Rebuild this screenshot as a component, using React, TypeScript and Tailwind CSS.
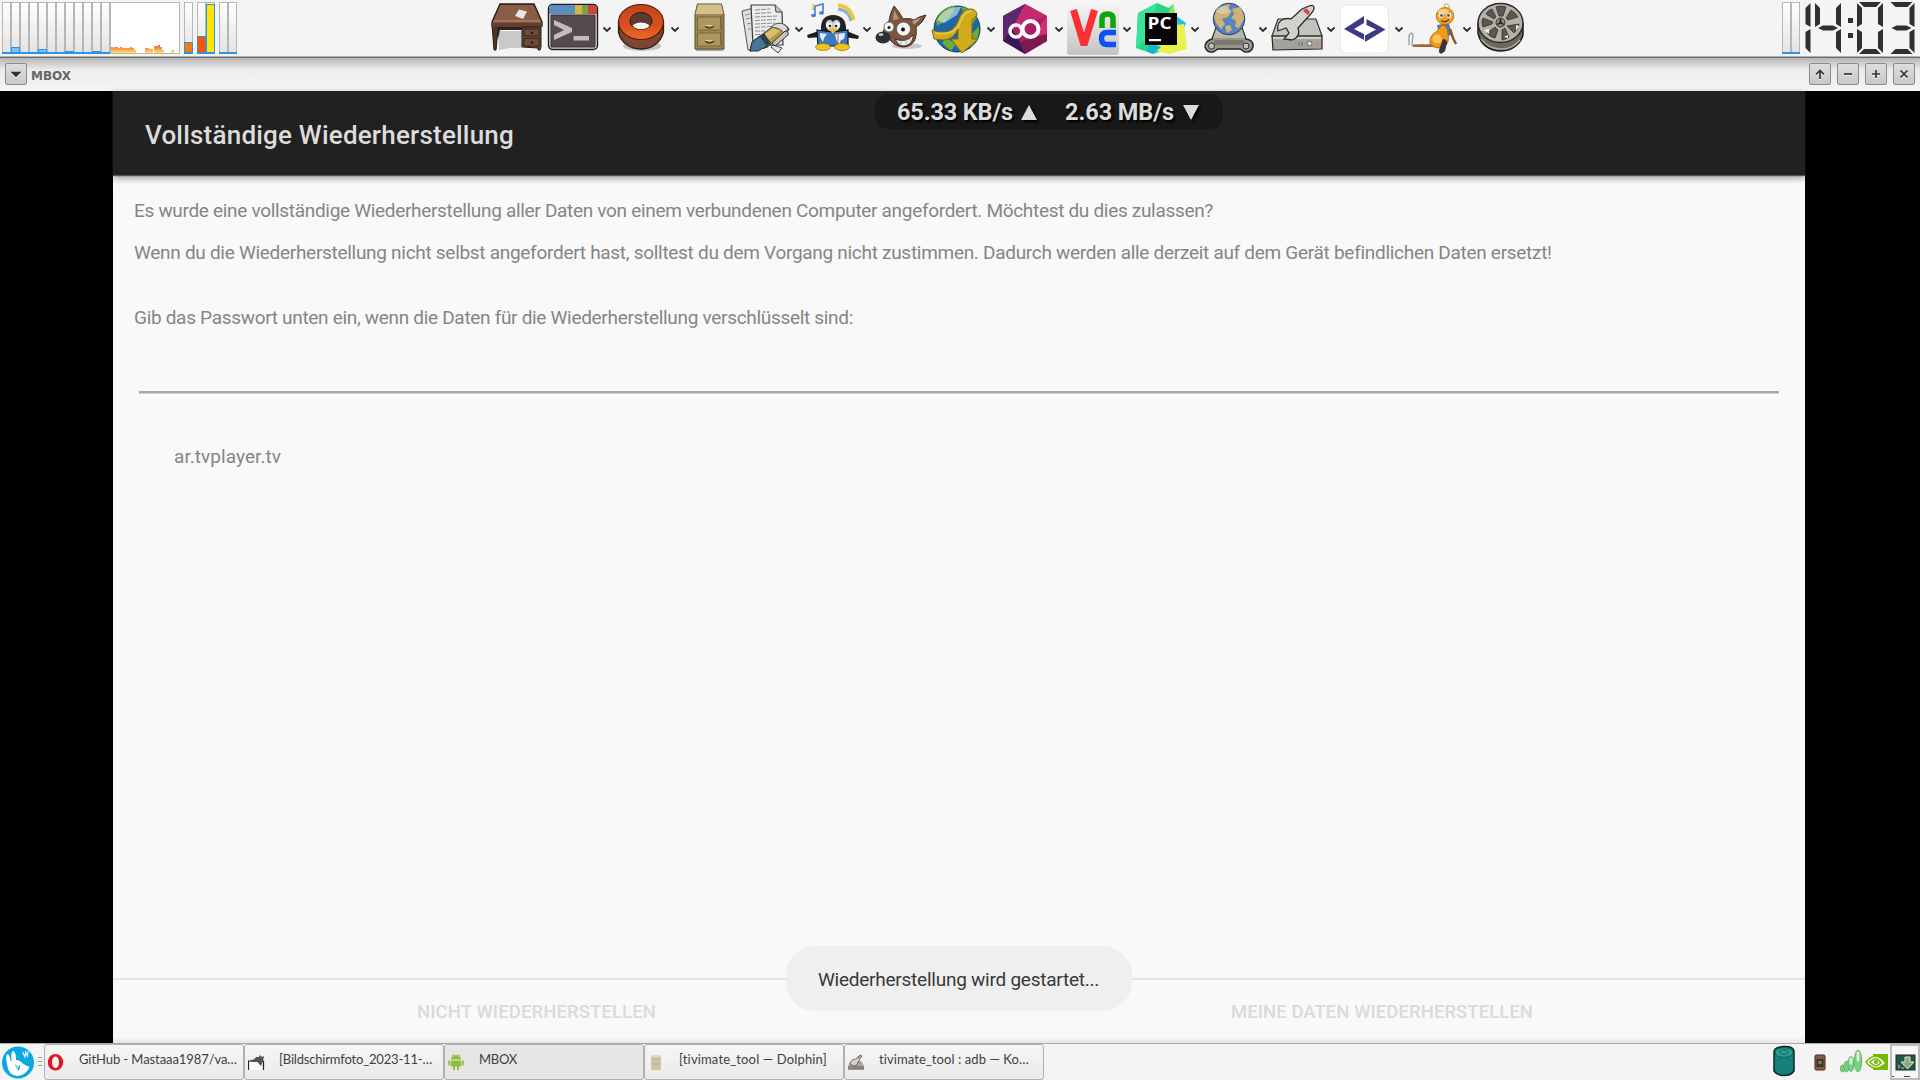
import { useLayoutEffect, useRef, useState, type ReactNode } from "react";

/* Single line of text whose letter spacing is tuned so that it spans `w` pixels. */
function Fit({ w, className = "", children }: { w: number; className?: string; children: string }) {
  const ref = useRef<HTMLSpanElement>(null);
  const [spacing, setSpacing] = useState(0);
  useLayoutEffect(() => {
    const natural = ref.current!.getBoundingClientRect().width;
    setSpacing((w - natural) / children.length);
  }, []);
  return (
    <span ref={ref} style={{ letterSpacing: spacing }} className={"inline-block whitespace-nowrap " + className}>
      {children}
    </span>
  );
}

function Icon({ children }: { children: ReactNode }) {
  return (
    <svg width="52" height="56" viewBox="0 0 52 56" className="block shrink-0 overflow-visible">
      {children}
    </svg>
  );
}

const Desk = () => (
  <Icon>
    <path d="M7 30h24v17H19L8 49z" fill="#c9c9c9" />
    <path d="M1 24l6 1v3L5 49H3z" fill="#4a3528" stroke="#241a14" />
    <path d="M9 3h34l8 18v4H1v-4z" fill="#7d5440" stroke="#2a1c14" strokeWidth="1.300" />
    <path d="M10 4h32l7 16H3z" fill="#8a5d47" />
    <path d="M3 19h46l1 2H2z" fill="#a87458" />
    <path d="M1 22h50v4H1z" fill="#5f3f30" />
    <path d="M31 26h19v20l-1 3h-2v-2l-16-1z" fill="#664636" stroke="#2a1c14" />
    <path d="M33 28h15v7H33zM33 37.500h15v7.500H33z" fill="#6f4c3a" stroke="#3c281c" />
    <circle cx="41" cy="32" r="1.200" fill="#2b1b12" />
    <circle cx="41" cy="41.500" r="1.200" fill="#2b1b12" />
    <path d="M28 8.500l8 2-4 7.500-8-3z" fill="#e6e6e6" />
    <path d="M7 26h24v3H9L7 38z" fill="#30211a" />
  </Icon>
);

const Terminal = () => (
  <Icon>
    <rect x="1.500" y="3.500" width="49" height="45" rx="4" fill="#d9d6cc" stroke="#1f1f1f" strokeWidth="1.400" />
    <path d="M2 13V7q0-3 4-3h22v9z" fill="#5a8fbd" />
    <path d="M28 4h7v9h-7z" fill="#d5b53f" />
    <path d="M35 4h6v9h-6z" fill="#7fa143" />
    <path d="M41 4h5q4 0 4 4v5h-9z" fill="#c9473f" />
    <path d="M4 14h44v32H4z" fill="#554a4d" stroke="#3a3234" />
    <path d="M7 19l18 8v4L7 39v-5l10-5-10-5z" fill="#c4bdb8" />
    <path d="M26.500 35H42v4.500H26.500z" fill="#c4bdb8" />
  </Icon>
);

const Donut = () => (
  <Icon>
    <defs>
      <linearGradient id="donutTop" x2="0" y2="1">
        <stop stopColor="#c2431c" />
        <stop offset=".6" stopColor="#d84f1d" />
        <stop offset="1" stopColor="#ee6a26" />
      </linearGradient>
    </defs>
    <ellipse cx="27" cy="45" rx="19" ry="5" fill="#8d8d8d" opacity=".5" />
    <path d="M3.500 21v10c2 10 11 17 22.500 17s20-7 22.500-17V21z" fill="#7e4632" stroke="#38190f" strokeWidth="1.300" />
    <ellipse cx="26" cy="21" rx="22.500" ry="17.500" fill="url(#donutTop)" stroke="#4c1d0d" strokeWidth="1.200" />
    <ellipse cx="26" cy="20" rx="11" ry="8.500" fill="#5c3a30" stroke="#3c170c" />
    <path d="M17.500 24.500c4-4 13-4 17 0-3 5-14 5-17 0z" fill="#f4f4f4" />
  </Icon>
);

const Cabinet = () => (
  <Icon>
    <path d="M12 47h30l-2 3H13z" fill="#aaa" />
    <path d="M14.500 3h24l2.500 10v35H12V13z" fill="#9c8754" stroke="#5d4e2d" />
    <path d="M15 3.500h23l2.500 9.500h-28z" fill="#d3c08c" />
    <path d="M14.500 16h23v13h-23zM14.500 32h23v13h-23z" fill="#ad975e" stroke="#78663a" />
    <path d="M22 25q4 4 9 0M22 40q4 4 9 0" fill="none" stroke="#4b3f22" strokeWidth="1.500" />
    <path d="M22 24.500h8M22 39.500h8" stroke="#dccb98" />
    <path d="M38 14h2.500v33H38z" fill="#8a7545" />
  </Icon>
);

const Writer = () => (
  <Icon>
    <path d="M3 10l12-3 14 39-20 3z" fill="#e0e0e0" stroke="#555" />
    <path d="M34 44l9 3-4 5-7-6z" fill="#e5e5e5" stroke="#444" />
    <path d="M12 4h24l7 7 1 33H14z" fill="#ececea" stroke="#3a3a3a" strokeWidth="1.200" />
    <path d="M36 4l1 7h6" fill="#c8c8c8" stroke="#444" />
    <path d="M16 9l15-1M16 12.500l16-1M16 16l22-1M16 19.500l21-1M16 23l20-1M16 26.500l16-1M16 30h10M16 33.500h6M6 14l5-1M7 18l5-1M8 23l5-1M9 28h4" stroke="#8f8f8f" strokeWidth="1" strokeDasharray="5 1" />
    <path d="M11 50l2-9 23-17q9-4 14 4l-4 7-20 12z" fill="#b79845" stroke="#222" />
    <path d="M20 37l14-10 7 3-16 12z" fill="#d8c06c" />
    <path d="M11 50l2-9 8-6 7 10-9 5z" fill="#47759a" stroke="#1e374b" />
    <path d="M21 35l4-3 7 10-4 3z" fill="#31414c" />
    <path d="M36 23q9-3 13 5l-4 5q-2-6-13-7z" fill="#dedbd5" stroke="#555" />
    <path d="M33 42l13-12q4 0 3 4L36 45z" fill="#c3c1b9" stroke="#333" />
  </Icon>
);

const Penguin = () => (
  <Icon>
    <path d="M8 14V5l8-2v8" fill="none" stroke="#3f7fd2" strokeWidth="1.600" />
    <ellipse cx="6.500" cy="14.500" rx="2.500" ry="1.800" fill="#3f7fd2" />
    <ellipse cx="14.500" cy="12" rx="2.500" ry="1.800" fill="#3f7fd2" />
    <path d="M6 3v5M5 8h2" stroke="#e9b526" strokeWidth="1.300" />
    <path d="M31 8c7 1 12 5 13 12" fill="none" stroke="#86aee2" strokeWidth="3" />
    <path d="M31 4c8 1 14 6 15.500 15" fill="none" stroke="#f1c62e" strokeWidth="3.500" />
    <path d="M15 29L0 34l1 3 14-1zM37 29l15 6-1 3-14-2z" fill="#1c1c1c" />
    <path d="M26 14c-8 0-12 5-12 13v18h25V27c0-8-5-13-13-13z" fill="#222" />
    <path d="M26 21q3-4 6-1t-1 9q-5 3-10 0-4-6-1-9t6 1z" fill="#c9c9c9" />
    <circle cx="22" cy="24.500" r="3" fill="#f4f4f4" />
    <circle cx="30" cy="24.500" r="3" fill="#f4f4f4" />
    <circle cx="23" cy="25" r="1.300" fill="#222" />
    <circle cx="29" cy="25" r="1.300" fill="#222" />
    <path d="M22 27.500h8l-4 5z" fill="#f3bb22" />
    <path d="M10 29l15 2 16-2v16H11z" fill="#3978c5" stroke="#111" strokeWidth="1.200" />
    <path d="M22.500 29h7l-3.500 4z" fill="#f3bb22" />
    <path d="M13 32l7 1-3 4-1 4-3-5zM28 33l10-1-1 6-3 1-2 5-3-6z" fill="#e5edf7" />
    <path d="M31 31v13" stroke="#d55" />
    <ellipse cx="16" cy="46" rx="7.500" ry="3.500" fill="#f0c31d" stroke="#98700c" strokeWidth=".7" />
    <ellipse cx="35" cy="46" rx="7.500" ry="3.500" fill="#f0c31d" stroke="#98700c" strokeWidth=".7" />
  </Icon>
);

const Wilber = () => (
  <Icon>
    <ellipse cx="32" cy="45" rx="15" ry="3" fill="#888" opacity=".4" />
    <path d="M14 20q1-8 5-15 5 5 9 13c5-1 9 0 11 1q6-4 12-5-3 8-10 12c1 8 0 19-12 20-8 0-13-5-15-9l-6-5q2-9 6-12z" fill="#80553d" stroke="#3c2b22" />
    <path d="M19 9l5 9-6 1zM47 16l-8 8-2-4z" fill="#b39483" />
    <path d="M20 38c8 3 14 1 18-4 1 6-4 11-10 11-4 0-6-4-8-7z" fill="#eee" stroke="#3c2b22" />
    <path d="M26 39v5M31 38v5M35 36v4" stroke="#999" strokeWidth=".8" />
    <circle cx="14" cy="26" r="5" fill="#f4f4f4" stroke="#555" strokeWidth=".8" />
    <circle cx="28.500" cy="28" r="7" fill="#f4f4f4" stroke="#555" strokeWidth=".8" />
    <circle cx="14" cy="26.500" r="1.500" fill="#111" />
    <circle cx="28" cy="28.500" r="2" fill="#111" />
    <ellipse cx="8" cy="36.500" rx="7.500" ry="6" fill="#2c3034" />
    <ellipse cx="6" cy="33.500" rx="2.500" ry="1.600" fill="#b9c1c6" />
  </Icon>
);

const Download = () => (
  <Icon>
    <circle cx="26" cy="28" r="23" fill="#1f66a8" stroke="#16405f" />
    <path d="M5 20Q11 6 24 5l-2 7-7 8-9 5zM30 6q10 0 16 10l-6 10-5-9zM15 37l10 6-5 7-9-8zM41 33l7-8q1 15-9 22z" fill="#6cab35" />
    <path d="M6 19Q14 5 30 6l-4 8-13 8z" fill="#d9edf6" opacity=".6" />
    <path d="M1 29q7 3 14 2 8-1 12-11 4-13 14-12 5 1 5 7-5 1-5 8v15h6L31 52 20 38h7V28q-4 10-14 11l-10-1z" fill="#d0ac1d" stroke="#7f6b14" />
    <path d="M4 32q20 3 25-10 4-12 12-12" fill="none" stroke="#ecd25a" strokeWidth="2" opacity=".7" />
  </Icon>
);

const Hexagon = () => (
  <Icon>
    <path d="M26 3l22 12v25L26 53 4 40V15z" fill="#ad1f65" />
    <path d="M26 3L4 15v25l9-12z" fill="#5d2871" />
    <path d="M26 3l22 12-22 8-13 5z" fill="#c22a72" />
    <path d="M4 40l9-12 8 13 5 12z" fill="#371a53" />
    <path d="M21 41l27-8v7L26 53z" fill="#7b1a4f" />
    <path d="M48 15v18l-14 3z" fill="#d52e6b" />
    <circle cx="17" cy="30" r="6" fill="none" stroke="#fff" strokeWidth="3.500" />
    <circle cx="31.500" cy="28" r="8" fill="none" stroke="#fff" strokeWidth="4" />
  </Icon>
);

const Vnc = () => (
  <Icon>
    <defs>
      <linearGradient id="vncBg" x2="0" y2="1">
        <stop stopColor="#f5f5f5" />
        <stop offset="1" stopColor="#c4c4c4" />
      </linearGradient>
    </defs>
    <rect x="0" y="2" width="52" height="52" rx="3" fill="url(#vncBg)" />
    <path d="M6.500 9l10.500 35L27.500 9" fill="none" stroke="#fd2f34" strokeWidth="7" strokeLinejoin="bevel" />
    <path d="M35 27V18q0-5 5.500-5t5.500 5v9" fill="none" stroke="#09a808" strokeWidth="5.500" />
    <path d="M49 31.500h-9q-5.500 0-5.500 6t5.500 6h9" fill="none" stroke="#0b50f8" strokeWidth="5.500" />
  </Icon>
);

const PyCharm = () => (
  <Icon>
    <path d="M3 12L22 2l12 5 4-4 3 14-5 30L18 53 1 47z" fill="#25d78b" />
    <path d="M22 2L3 12 1 47l12-10z" fill="#3ce29a" />
    <path d="M38 3l3 14-12 4z" fill="#8be64b" />
    <path d="M41 15l10 7-4 10-6 2z" fill="#16c8e8" />
    <path d="M41 24l8-1 3 25-18 5-16-4 4-8z" fill="#e8f24a" />
    <path d="M16 42l10 4-8 7-7-3z" fill="#10b8c8" />
    <rect x="10" y="12" width="32" height="32" fill="#060606" />
    <text x="12.500" y="27.800" fill="#fff" fontFamily="Open Sans, sans-serif" fontWeight="700" fontSize="16.500" textLength="24" lengthAdjust="spacingAndGlyphs">PC</text>
    <path d="M14 38h12v2.200H14z" fill="#fff" />
  </Icon>
);

const GlobeStand = () => (
  <Icon>
    <path d="M13 27h26l4 11q8 1 7 8-2 6-8 5l-5-3H15l-5 3q-6 1-8-5 0-6 7-8z" fill="#98958a" stroke="#26241f" strokeWidth="1.400" />
    <path d="M13 28h26l3 9H10z" fill="#b9b6aa" />
    <path d="M11 39h30v5H11z" fill="#7b786f" />
    <circle cx="8.500" cy="45" r="3" fill="#c4c0b4" stroke="#333" />
    <circle cx="43" cy="45" r="3" fill="#c4c0b4" stroke="#333" />
    <circle cx="26" cy="18" r="15.800" fill="#5783bf" stroke="#283f66" />
    <path d="M13 10q6-6 14-7l-2 5 4 2-4 6-6 2 3 5-4 5-5-6-2-6zM29 8l8-2q4 6 4 12l-5 9-4-1 1-6-5-3 3-4zM22 25l5-1 2 5-5 3z" fill="#cdb27a" />
    <ellipse cx="20" cy="9" rx="7" ry="4" fill="#fff" opacity=".3" />
  </Icon>
);

const DriveWrench = () => (
  <Icon>
    <path d="M7 18h38l6 17H1z" fill="#c3c3bd" stroke="#333" strokeWidth="1.200" />
    <path d="M1 35h50v13l-49 1z" fill="#a3a39d" stroke="#252525" strokeWidth="1.200" />
    <path d="M2 36h48v2H2z" fill="#d0d0c9" />
    <path d="M28 41v4M31 41v4" stroke="#666" />
    <circle cx="38.500" cy="42.500" r="2.500" fill="#ddd" stroke="#666" />
    <path d="M46 40v5" stroke="#d58b5a" strokeWidth="2" />
    <path d="M38 5q5-2 5 2 0 3-5 8L27 27q3 9-6 12l-8-1 5-6-3-5-8 3q-2-9 6-12 4-1 7 0L31 8z" fill="#d4d3cb" stroke="#2d2d2d" strokeWidth="1.300" />
    <path d="M32 10l5 4 2-3-4-4z" fill="#cc4c45" />
  </Icon>
);

const CodeTag = () => (
  <Icon>
    <rect x="1" y="4" width="48.500" height="48" rx="7" fill="#fff" stroke="#e6e6e6" />
    <path d="M25 15L5 28l20 11v-6l-10-5 10-6zM27.500 18v6l9.500 4.500-11 6V41l20.500-12.500z" fill="#3d3a84" />
  </Icon>
);

const Mascot = () => (
  <Icon>
    <path d="M2 44V35q2-5 4-1l-1 10h12" fill="none" stroke="#999" strokeWidth="1.300" />
    <path d="M6 44l20-1 2 3-22 0z" fill="#a5622c" />
    <path d="M30 24l12-2 3 12-12 2z" fill="#3a80bd" />
    <path d="M43 28l3 9 3 6" fill="none" stroke="#8e552b" strokeWidth="2.500" />
    <path d="M35 24q5 0 6 8 2 12-5 14-9 3-13-4-1-7 6-11z" fill="#f0981b" stroke="#a45d0b" strokeWidth=".8" />
    <circle cx="30" cy="38" r="4.500" fill="#f9c452" />
    <ellipse cx="38" cy="15" rx="8.800" ry="8.500" fill="#f6a41f" stroke="#b8690f" strokeWidth=".8" />
    <ellipse cx="36" cy="10.500" rx="5" ry="2.500" fill="#fbd27a" />
    <path d="M38 6q-2-4 2-3 3 1 2 4" fill="none" stroke="#c7a06c" />
    <circle cx="34" cy="14.500" r="2.400" fill="#e9f3ff" />
    <circle cx="42" cy="14.500" r="2.400" fill="#e9f3ff" />
    <circle cx="34.500" cy="14.500" r="1.400" fill="#2465aa" />
    <circle cx="41.500" cy="14.500" r="1.400" fill="#2465aa" />
    <path d="M34 19.500q4 3 8-1" fill="none" stroke="#8b2f10" strokeWidth="1.300" />
    <path d="M36 38q4 0 4 4l-2 8q-6 6-6-1z" fill="#35373b" />
  </Icon>
);

const Reel = () => (
  <Icon>
    <path d="M3 23v9c2 11 11 18 23 18s20-8 22-16V23z" fill="#6b6861" stroke="#1d1c1a" strokeWidth="1.500" />
    <path d="M6 38q8 10 20 10t19-9" fill="none" stroke="#aaa69c" strokeWidth="1.500" />
    <ellipse cx="25.500" cy="22" rx="22.500" ry="19.500" fill="#b5b1a6" stroke="#2c2a27" strokeWidth="1.500" />
    <g fill="#5b5852" stroke="#33312e" strokeWidth=".8">
      <path d="M21 6q5-2 10 0l-3 9h-4z" />
      <path d="M36 9q5 3 7 7l-10 3-2-2z" />
      <path d="M44 23q-1 6-5 9l-7-7z" />
      <path d="M34 36q-4 3-7 3v-10l3-2z" />
      <path d="M20 37q-5-1-8-5l8-6 3 3z" />
      <path d="M8 26q-2-5 0-9l10 4-1 2z" />
      <path d="M11 13q2-4 6-5l4 8-2 2z" />
    </g>
    <path d="M9 29l5-1v5zM29 36l4-2v3zM41 24l3 1-3 5z" fill="#eee" />
    <circle cx="25.500" cy="21.500" r="4.500" fill="#8b877e" stroke="#333" />
    <path d="M25.500 21.500v-3.500M25.500 21.500l3 2M25.500 21.500l-3 2" stroke="#111" strokeWidth="1.400" />
  </Icon>
);

const launchers: { icon: () => ReactNode; menu: boolean }[] = [
  { icon: Desk, menu: false },
  { icon: Terminal, menu: true },
  { icon: Donut, menu: true },
  { icon: Cabinet, menu: false },
  { icon: Writer, menu: true },
  { icon: Penguin, menu: true },
  { icon: Wilber, menu: false },
  { icon: Download, menu: true },
  { icon: Hexagon, menu: true },
  { icon: Vnc, menu: true },
  { icon: PyCharm, menu: true },
  { icon: GlobeStand, menu: true },
  { icon: DriveWrench, menu: true },
  { icon: CodeTag, menu: true },
  { icon: Mascot, menu: true },
  { icon: Reel, menu: false },
];

type Bar = { h?: number; fill?: string };

/* One column of a load monitor. */
function Meter({ h = 0, fill = "bg-[#7cc0f8]" }: Bar) {
  return (
    <div className="flex h-[52px] w-[9px] flex-col justify-end border border-b-0 border-[#b6b6b6] bg-linear-to-b from-white to-[#e2e2e2]">
      {h > 0 && <div className={"-mx-px shrink-0 border border-b-0 border-[#2b93e8] " + fill} style={{ height: h }} />}
      <div className="-mx-px h-[2px] shrink-0 bg-[#2b93e8]" />
    </div>
  );
}

const cpu = [0, 5, 0, 0, 3, 0, 0, 1, 0, 0, 1, 0];
const net: [number, number][] = [
  [0, 6], [2, 5], [3, 6], [5, 6], [7, 5], [9, 6], [11, 5], [13, 5], [15, 5], [17, 5], [19, 6], [21, 5], [23, 3],
  [34, 5], [36, 5], [38, 4], [40, 4], [43, 7], [45, 7], [47, 8], [49, 6], [51, 3], [60, 2], [61, 3],
];

const segments: Record<string, string> = {
  a: "2,2 24,2 19,7 7,7",
  b: "26,3 26,27 21,24 21,8",
  c: "26,29 26,53 21,48 21,32",
  d: "2,54 24,54 19,49 7,49",
  e: "0,29 0,53 5,48 5,32",
  f: "0,3 0,27 5,24 5,8",
  g: "3,28 8,25.500 18,25.500 23,28 18,30.500 8,30.500",
};
const clock: [number, string][] = [
  [0.5, "bc"],
  [31, "fgbc"],
  [73, "abcdef"],
  [104.5, "abgcd"],
];

function LcdClock() {
  return (
    <svg width="132" height="56" viewBox="0 0 132 56" role="img" aria-label="14:03" fill="#303030" className="block">
      {clock.map(([x, on]) => (
        <g key={x} transform={`translate(${x} 0)`}>
          {on.split("").map((s) => <polygon key={s} points={segments[s]} />)}
        </g>
      ))}
      <rect x="64" y="18" width="5" height="5" />
      <rect x="64" y="33" width="5" height="5" />
    </svg>
  );
}

function TopPanel() {
  return (
    <header className="flex h-[58px] border-b border-[#6e6e6e] bg-[#f4f4f4] pl-[2px] pr-[4px] shadow-[inset_0_-1px_0_#b0b0b0]">
      <div className="flex w-[489px] pt-[2px]">
        {cpu.map((h, i) => <Meter key={i} h={h} />)}
        <div className="h-[52px] w-[70px] border border-[#b6b6b6] bg-white">
          <svg width="68" height="50" viewBox="0 0 68 50" className="block">
            <defs>
              <linearGradient id="heat" gradientUnits="userSpaceOnUse" x1="0" y1="42" x2="0" y2="50">
                <stop stopColor="#ef6558" />
                <stop offset=".45" stopColor="#f6935a" />
                <stop offset="1" stopColor="#fde94c" />
              </linearGradient>
            </defs>
            {net.map(([x, h]) => <rect key={x} x={x} y={50 - h} width="2" height={h} fill="url(#heat)" />)}
          </svg>
        </div>
        <div className="ml-[4px] flex"><Meter h={10} fill="bg-[#f57c0a]" /></div>
        <div className="ml-[4px] flex">
          <Meter h={16} fill="bg-[#ff5100]" />
          <Meter h={48} fill="bg-[#ffe600]" />
        </div>
        <div className="ml-[4px] flex"><Meter /><Meter /></div>
      </div>
      <nav className="flex">
        {launchers.map(({ icon: Glyph, menu }, i) => (
          <div key={i} className="flex items-center">
            <Glyph />
            {menu ? (
              <svg width="16" height="56" viewBox="0 0 16 56" className="block">
                <path d="M4.500 26.500l3.500 3.500 3.500-3.500" fill="none" stroke="#2e2e2e" strokeWidth="1.800" />
              </svg>
            ) : (
              <div className="w-[4px]" />
            )}
          </div>
        ))}
      </nav>
      <div className="ml-auto flex">
        <div className="mr-[-16px] flex pt-[2px]"><Meter /><Meter /></div>
        <LcdClock />
      </div>
    </header>
  );
}

function WinButton({ d, fill = "none" }: { d: string; fill?: string }) {
  return (
    <button className="flex size-[22px] items-center justify-center rounded-[2px] border border-[#8c8c8c] bg-linear-to-b from-[#dedede] to-[#c9c9c9]">
      <svg width="12" height="12" viewBox="0 0 12 12" fill={fill} stroke="#333" strokeWidth="1.700" className="drop-shadow-[0_1px_0_#f4f4f4]">
        <path d={d} />
      </svg>
    </button>
  );
}

function TitleBar() {
  return (
    <div className="flex h-[33px] bg-linear-to-b from-[#b4b4b4] via-[#ececec] via-35% to-[#f5f5f5] px-[5px] pt-[5px]">
      <WinButton d="M2.500 4.500h7L6 8z" fill="#222" />
      <Fit w={40} className="ml-[4px] h-[24px] font-['DejaVu_Sans'] text-[12px] font-bold leading-[27px] text-[#666]">MBOX</Fit>
      <div className="ml-auto flex gap-[6px]">
        <WinButton d="M6 11V2.500M2 6.500l4-4 4 4" />
        <WinButton d="M2 6h8" />
        <WinButton d="M2 6h8M6 2v8" />
        <WinButton d="M2.500 2.500l7 7M9.500 2.500l-7 7" />
      </div>
    </div>
  );
}

function Dialog() {
  return (
    <div className="flex h-[952px] justify-center bg-black pr-[2px]">
      <main className="relative flex w-[1692px] flex-col bg-[#f9f9f9] font-['Roboto'] text-[19px] leading-[24px] text-[#858585]">
        <div className="h-[84px] bg-[#212121] pl-[32px] pt-[28px] shadow-[0_1px_1px_#555,0_3px_7px_rgba(0,0,0,.4)]">
          <Fit w={369} className="text-[26px] font-medium leading-[32px] text-[#dcdcdc]">Vollständige Wiederherstellung</Fit>
        </div>
        <div className="flex flex-col items-start pl-[21px] pt-[24px]">
          <Fit w={1079}>Es wurde eine vollständige Wiederherstellung aller Daten von einem verbundenen Computer angefordert. Möchtest du dies zulassen?</Fit>
          <Fit w={1417} className="mt-[18px]">Wenn du die Wiederherstellung nicht selbst angefordert hast, solltest du dem Vorgang nicht zustimmen. Dadurch werden alle derzeit auf dem Gerät befindlichen Daten ersetzt!</Fit>
          <Fit w={719} className="mt-[41px]">Gib das Passwort unten ein, wenn die Daten für die Wiederherstellung verschlüsselt sind:</Fit>
          <div className="ml-[5px] mt-[61px] h-[3px] w-[1640px] border-b border-[#d0d0d0] bg-[#a8a8a8]" />
          <Fit w={107} className="ml-[40px] mt-[51px]">ar.tvplayer.tv</Fit>
        </div>
        <div className="mt-auto flex h-[65px] border-t-2 border-[#e3e3e3] bg-linear-to-b from-[#f9f9f9] from-90% to-[#e6e6e6] text-[18.500px] font-medium text-[#dadada]">
          <div className="w-1/2 pl-[304px] pt-[20px]"><Fit w={239}>NICHT WIEDERHERSTELLEN</Fit></div>
          <div className="w-1/2 pl-[272px] pt-[20px]"><Fit w={302}>MEINE DATEN WIEDERHERSTELLEN</Fit></div>
        </div>
        <div className="absolute left-[762px] top-[3px] flex h-[35px] w-[348px] items-center rounded-[13px] bg-[#181818] pl-[22px] pt-[2px] text-[23.500px] font-bold leading-[33px] text-[#dcdcdc] [text-shadow:2px_2px_2px_#000]">
          <Fit w={116}>65.33 KB/s</Fit>
          <svg width="16" height="16" viewBox="0 0 16 16" fill="#dcdcdc" className="ml-[8px] drop-shadow-[2px_2px_1px_#000]"><path d="M0 15L8 0l8 15z" /></svg>
          <Fit w={109} className="ml-[28px]">2.63 MB/s</Fit>
          <svg width="16" height="16" viewBox="0 0 16 16" fill="#dcdcdc" className="ml-[9px] drop-shadow-[2px_2px_1px_#000]"><path d="M0 0L8 15 16 0z" /></svg>
        </div>
        <div className="absolute left-[673px] top-[855px] h-[65px] w-[346px] rounded-[29px] bg-[#efefef] pl-[32px] pt-[22px] text-[#383838]">
          <Fit w={281}>Wiederherstellung wird gestartet...</Fit>
        </div>
      </main>
    </div>
  );
}

const tasks = [
  {
    label: "GitHub - Mastaaa1987/va…", w: 158,
    icon: <path fillRule="evenodd" d="M7.500 0a7.700 8.300 0 1 0 .01 0zM7.500 2.500a3.500 5.800 0 1 1-.01 0z" fill="#dc1a2b" />,
  },
  {
    label: "[Bildschirmfoto_2023-11-…", w: 153,
    icon: <><path d="M.5 7v9M0 7h15.500v9" fill="none" stroke="#222" strokeWidth="1.200" /><path d="M2 6q5 0 6-3h3l1-2 2 2 2-1-1 5-2 5-4-3-5-1z" fill="#555" /><path d="M1.500 8h8l4 5v3h-12z" fill="#fff" /></>,
  },
  {
    label: "MBOX", w: 38, active: true,
    icon: <><path d="M3 5.500a5 4.500 0 0 1 10 0zM3 6.500h10v6H3zM.3 6.500h2v5h-2zM13.700 6.500h2v5h-2zM5 12h2v4H5zM9 12h2v4H9z" fill="#95bd3c" /><path d="M4 0l1.500 2M12 0l-1.500 2" stroke="#95bd3c" /></>,
  },
  {
    label: "[tivimate_tool — Dolphin]", w: 148,
    icon: <><path d="M4 1h8l1 2v13H3V3z" fill="#d0c4a8" /><path d="M4 1h8l1 2H3z" fill="#e6dcc0" /><path d="M4 5h8M4 10h8" stroke="#bcae8d" /></>,
  },
  {
    label: "tivimate_tool : adb — Ko…", w: 150,
    icon: <><path d="M3 7h10l3 5v4H0v-4z" fill="#a3a39b" /><path d="M0 12h16v3.500H0z" fill="#84847c" /><path d="M2 10q1-5 6-5l4-4 2 1-4 6q0 4-4 4z" fill="#d3d2ca" stroke="#555" strokeWidth=".8" /><path d="M10 4l2-2" stroke="#c55" strokeWidth="1.500" /></>,
  },
];

function TaskBar() {
  return (
    <footer className="flex h-[37px] border-t border-[#a8a8a8] bg-[#f4f4f4]">
      <svg width="44" height="36" viewBox="0 0 44 36" className="block">
        <circle cx="18" cy="18.500" r="16" fill="#08a8e0" />
        <path d="M7 20q-2-9 .5-10 2 0 3 7h1q-1-9 1.500-10 3 0 3 9 4 0 6 3l5 3q3 0 2 2-3 7-12 8-9-1-10-12z" fill="#fff" />
        <path d="M15 21l5 3M16 24l4 1M18 27l2-6" stroke="#08a8e0" strokeWidth=".9" />
        <path d="M22.500 8l2.500 5 .5-5 2 4 .5-5" fill="none" stroke="#fff" strokeWidth="1.100" />
        <path d="M38 13.500h4M38 17.500h4M38 21.500h4" stroke="#999" />
      </svg>
      {tasks.map((t) => (
        <div
          key={t.label}
          className={
            "flex h-[36px] w-[200px] rounded-[3px] border border-[#b0b0b0] " +
            (t.active ? "bg-[#e6e6e6]" : "bg-linear-to-b from-[#f6f6f6] to-[#eaeaea]")
          }
        >
          <svg width="17" height="17" viewBox="0 0 17 17" className="ml-[3px] mt-[9px] block">{t.icon}</svg>
          <Fit w={t.w} className="ml-[14px] mt-[2px] h-[24px] font-['Lato'] text-[13px] leading-[25px] text-[#404040]">{t.label}</Fit>
        </div>
      ))}
      <div className="ml-auto flex h-[36px]">
        <svg width="122" height="36" viewBox="0 0 122 36" className="block">
          <path d="M5 8q0-5 10-5.500T25 8v19q-3 4.500-10 4.500T5 27z" fill="#158078" stroke="#102826" strokeWidth="1.500" />
          <ellipse cx="15" cy="8.500" rx="9" ry="4.800" fill="#2da095" stroke="#0d5e58" />
          <ellipse cx="15" cy="8" rx="4.500" ry="2.500" fill="#25968b" stroke="#0d6d66" />
          <rect x="46" y="11" width="10" height="15" rx="1" fill="#8a5a3c" stroke="#4a2e1e" />
          <rect x="47.500" y="15" width="7" height="8" fill="#3b332f" />
          <circle cx="51" cy="18.500" r="2" fill="#777" />
          <g fill="#7ccf80" stroke="#4fae54" strokeWidth=".7">
            <ellipse cx="73.500" cy="24.500" rx="2.200" ry="3.500" />
            <ellipse cx="77.500" cy="22.500" rx="2.500" ry="5.500" />
            <ellipse cx="82" cy="20" rx="3" ry="7.500" />
            <ellipse cx="89" cy="17" rx="3.800" ry="11" />
          </g>
          <path d="M89 9v7M82 15v4" stroke="#d4f6d4" strokeWidth="3" strokeLinecap="round" />
          <path d="M104 10h15v16h-15z" fill="#76b900" />
          <path d="M97 18q10-12 20 1-11 11-20-1zM101 18q6-7 11 1-6 6-11-1z" fill="#f4f4f4" stroke="#76b900" strokeWidth="1.500" />
          <circle cx="107" cy="18" r="2" fill="#76b900" />
        </svg>
        <div className="-ml-[1px] h-[36px] w-[30px] border-2 border-[#bcbcbc] bg-[#f7f7f7]">
          <svg width="26" height="32" viewBox="0 0 26 32" className="block">
            <rect x="4" y="9" width="19" height="15" fill="#245642" stroke="#1b2f27" />
            <path d="M13 11h5v5h4l-6.500 7L9 16h4z" fill="#8ea884" stroke="#dbe7cf" />
            <path d="M6 19l2 1.500L6 22M9 22h3" fill="none" stroke="#ddd" strokeWidth=".8" />
            <path d="M0 30.500h2M12 30.500h6" stroke="#445" strokeWidth="1" />
          </svg>
        </div>
      </div>
    </footer>
  );
}

export default function App() {
  return (
    <div className="flex h-[1080px] w-[1920px] flex-col overflow-hidden bg-[#f4f4f4]">
      <TopPanel />
      <TitleBar />
      <Dialog />
      <TaskBar />
    </div>
  );
}
